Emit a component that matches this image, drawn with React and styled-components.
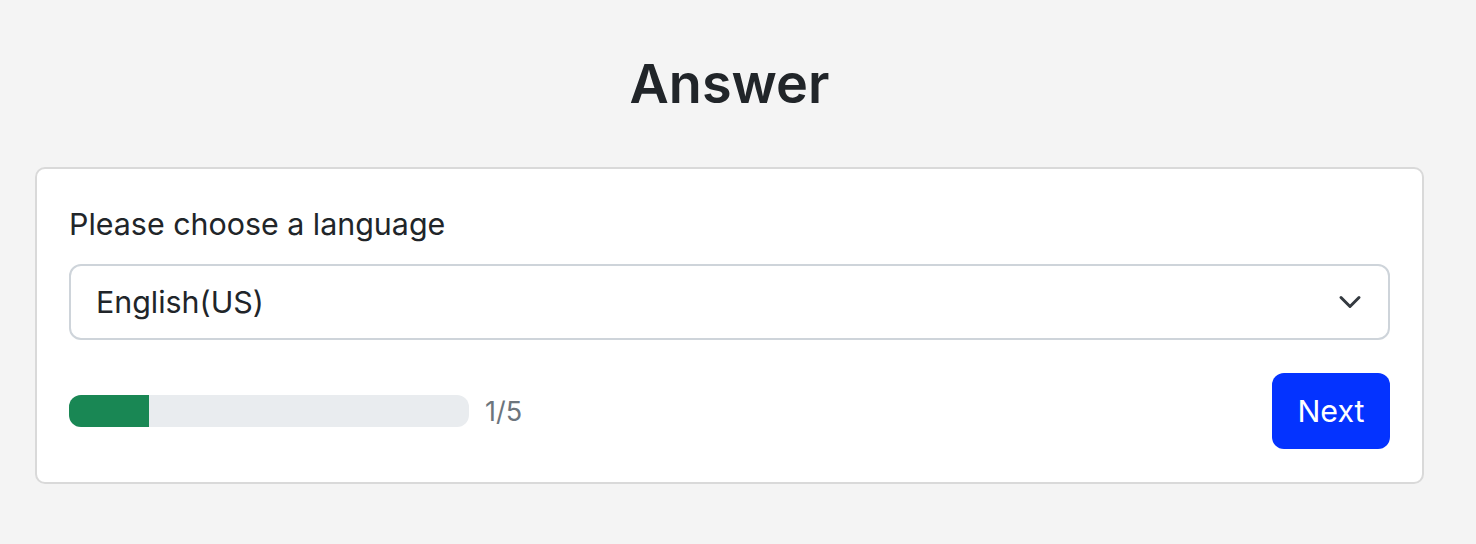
import React from 'react'
import styled, { createGlobalStyle } from 'styled-components'

const GlobalStyle = createGlobalStyle`
  body {
    margin: 0;
    background: #f4f4f4;
    font-family: Inter, 'Noto Sans', sans-serif;
    color: #212529;
  }
`

const Page = styled.div`
  padding: 52px 52px 0 35px;
`

const Title = styled.h1`
  margin: 0 0 50px;
  text-align: center;
  font-size: 54px;
  font-weight: 600;
  line-height: 1.2;
  color: #212529;
`

const Card = styled.div`
  background: #fff;
  border: 2px solid #d9d9d9;
  border-radius: 10px;
  padding: 37px 32px 33px;
`

const Label = styled.div`
  font-size: 30.4px;
  line-height: 1.2;
  margin-bottom: 22px;
`

const SelectBox = styled.div`
  display: flex;
  align-items: center;
  justify-content: space-between;
  height: 76px;
  box-sizing: border-box;
  border: 2px solid #ced4da;
  border-radius: 12px;
  padding: 0 26px 0 25px;
  font-size: 30.4px;
  margin-bottom: 33px;
`

const Footer = styled.div`
  display: flex;
  align-items: center;
  justify-content: space-between;
`

const ProgressGroup = styled.div`
  display: flex;
  align-items: center;
  gap: 16px;
`

const Track = styled.div`
  width: 400px;
  height: 32px;
  background: #e9ecef;
  border-radius: 12px;
  overflow: hidden;
`

const Fill = styled.div`
  height: 100%;
  background: #198754;
`

const Count = styled.span`
  font-size: 27px;
  color: #6c757d;
`

const Button = styled.button`
  width: 118px;
  height: 76px;
  border: none;
  border-radius: 12px;
  background: #0433ff;
  color: #fff;
  font-family: inherit;
  font-size: 30.4px;
  font-weight: 400;
`

const Chevron = () => (
  <svg width="24" height="24" viewBox="0 0 16 16" fill="none">
    <path d="M2 5l6 6 6-6" stroke="#343a40" strokeWidth="2" strokeLinecap="round" strokeLinejoin="round" />
  </svg>
)

const App = () => {
  const step = 1
  const total = 5
  return (
    <Page>
      <GlobalStyle />
      <Title>Answer</Title>
      <Card>
        <Label>Please choose a language</Label>
        <SelectBox>
          <span>English(US)</span>
          <Chevron />
        </SelectBox>
        <Footer>
          <ProgressGroup>
            <Track>
              <Fill style={{ width: `${(step / total) * 100}%` }} />
            </Track>
            <Count>{step}/{total}</Count>
          </ProgressGroup>
          <Button>Next</Button>
        </Footer>
      </Card>
    </Page>
  )
}

export default App
